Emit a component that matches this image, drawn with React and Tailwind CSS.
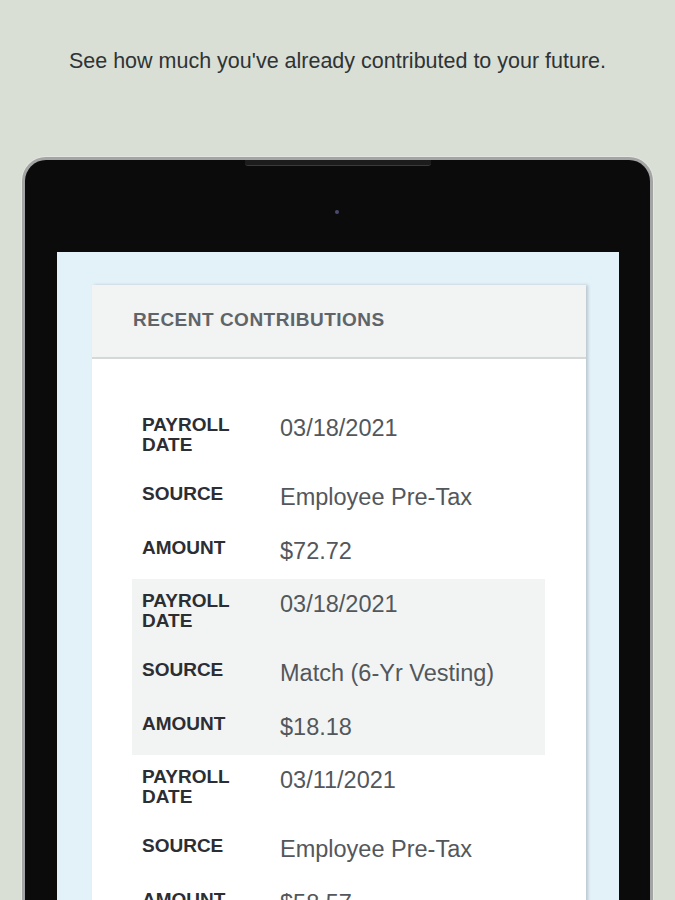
import React from "react";

const entries = [
  { date: "03/18/2021", source: "Employee Pre-Tax", amount: "$72.72", hl: false },
  { date: "03/18/2021", source: "Match (6-Yr Vesting)", amount: "$18.18", hl: true },
  { date: "03/11/2021", source: "Employee Pre-Tax", amount: "$58.57", hl: false },
];

function Label({ children }) {
  return (
    <div className="w-[138px] shrink-0 text-[19px] leading-[20px] font-bold text-[#2b2e32] uppercase">
      {children}
    </div>
  );
}

function Value({ children }) {
  return <div className="pt-[1px] text-[23.5px] leading-[24px] text-[#53575b]">{children}</div>;
}

function Entry({ e }) {
  return (
    <div className={`flex flex-col gap-[29px] px-[10px] pt-[12px] pb-[16px] ${e.hl ? "bg-[#f2f4f3]" : ""}`}>
      <div className="flex items-start">
        <Label>
          Payroll
          <br />
          Date
        </Label>
        <Value>{e.date}</Value>
      </div>
      <div className="flex items-start">
        <Label>Source</Label>
        <Value>{e.source}</Value>
      </div>
      <div className="flex items-start">
        <Label>Amount</Label>
        <Value>{e.amount}</Value>
      </div>
    </div>
  );
}

export default function App() {
  return (
    <div
      className="w-[675px] h-[900px] overflow-hidden bg-[#d9dfd4] flex flex-col"
      style={{ fontFamily: '"Liberation Sans", Arial, sans-serif' }}
    >
      <p className="pt-[49px] text-center text-[21.5px] leading-[24px] text-[#2f3336]">
        See how much you've already contributed to your future.
      </p>
      <div className="relative mt-[84px] ml-[22px] w-[631px] h-[800px] shrink-0 rounded-t-[24px] border-[3px] border-b-0 border-[#a3a5a4] bg-[#0b0b0b] shadow-[0_0_0_1px_#e4e6e2] pt-[92px] pl-[32px] pr-[31px]">
        <div className="absolute left-[220px] top-0 w-[186px] h-[6px] rounded-b-[3px] bg-[#1c1c1c] border-b border-[#3a3a3a]" />
        <div className="absolute left-[310px] top-[50px] w-[4px] h-[4px] rounded-full bg-[#4a4a6e]" />
        <div className="h-full bg-[#e3f1f9] pt-[33px] pl-[35px] pr-[33px]">
          <div className="bg-white h-full shadow-[2px_0_3px_rgba(0,0,0,0.18)]">
            <div className="h-[74px] bg-[#f2f3f3] border-b-2 border-[#d5d8d8] flex items-center pl-[41px] pb-[2px]">
              <span className="text-[19px] font-bold tracking-[0.5px] text-[#5f6468] uppercase">
                Recent Contributions
              </span>
            </div>
            <div className="pt-[44px] pl-[40px] pr-[41px]">
              {entries.map((e, i) => (
                <Entry key={i} e={e} />
              ))}
            </div>
          </div>
        </div>
      </div>
    </div>
  );
}
